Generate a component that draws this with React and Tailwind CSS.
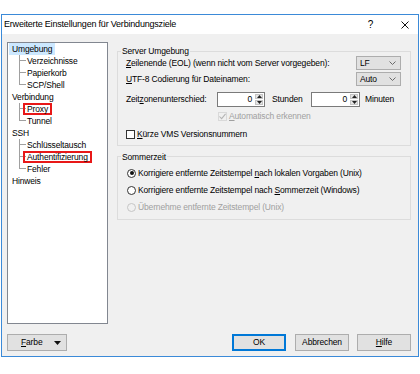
const font = { fontFamily: '"Liberation Sans", Arial, sans-serif' }

const U = ({ children }) => <span className="underline underline-offset-[1px]">{children}</span>

const Chevron = () => (
  <svg width="7" height="4" viewBox="0 0 7 4" className="text-[#6a6a6a]">
    <polyline points="0.5,0.5 3.5,3.5 6.5,0.5" fill="none" stroke="currentColor" strokeWidth="1" />
  </svg>
)

const Combo = ({ value }) => (
  <div className="w-[45px] h-[14px] border border-[#adadad] bg-[#e1e1e1] flex items-center justify-between pl-[3px] pr-[4px]">
    <span>{value}</span>
    <Chevron />
  </div>
)

const Spin = ({ value, w }) => (
  <div className={`${w} h-[15px] border border-[#7a7a7a] bg-white flex items-stretch`}>
    <div className="flex-1 flex items-center justify-end pr-[3px]">{value}</div>
    <div className="w-[9px] flex flex-col gap-[1px] p-[1px] pl-0">
      <div className="flex-1 bg-[#e5e5e5] border border-[#c4c4c4] flex items-center justify-center">
        <svg width="5" height="3" viewBox="0 0 5 3"><polygon points="0,3 5,3 2.5,0" fill="#222" /></svg>
      </div>
      <div className="flex-1 bg-[#e5e5e5] border border-[#c4c4c4] flex items-center justify-center">
        <svg width="5" height="3" viewBox="0 0 5 3"><polygon points="0,0 5,0 2.5,3" fill="#222" /></svg>
      </div>
    </div>
  </div>
)

const Radio = ({ checked, disabled }) => (
  <div
    className={`w-[9px] h-[9px] rounded-full border flex items-center justify-center ${
      disabled ? "border-[#c6c6c6] bg-[#f0f0f0]" : "border-[#333] bg-white"
    }`}
  >
    {checked && <div className="w-[4px] h-[4px] rounded-full bg-[#111]" />}
  </div>
)

const TreeChild = ({ label, last, marked }) => (
  <div className="flex h-[12px] items-center">
    <div className="w-[11px]" />
    <div className="w-[7px] h-full flex flex-col">
      <div className="h-[6px] border-l border-b border-[#a0a0a0]" />
      <div className={`h-[6px] ${last ? "" : "border-l border-[#a0a0a0]"}`} />
    </div>
    {marked ? (
      <span className="-ml-[3px] h-[12px] px-[2px] border-2 border-[#e81818] flex items-center leading-[8px]">
        {label}
      </span>
    ) : (
      <span className="ml-[1px]">{label}</span>
    )}
  </div>
)

const TreeRoot = ({ label, selected }) => (
  <div className="flex h-[12px] items-center">
    <span className={`ml-[1px] pl-[3px] pr-[3px] h-[12px] flex items-center ${selected ? "bg-[#cce8ff]" : ""}`}>
      {label}
    </span>
  </div>
)

const Button = ({ children, primary, className = "" }) => (
  <div
    className={`h-[17px] w-[54px] flex items-center justify-center bg-[#e1e1e1] border ${
      primary ? "border-[#0078d7] shadow-[inset_0_0_0_1px_#0078d7]" : "border-[#adadad]"
    } ${className}`}
  >
    {children}
  </div>
)

export default function App() {
  return (
    <div className="bg-white h-[374px] pt-[14px] pl-[1px] text-[8.5px] text-black tracking-[-0.15px]" style={font}>
      <div className="w-[418px] border border-[#3b8ad8] flex flex-col">
        {/* title bar */}
        <div className="h-[19px] bg-white flex items-center pl-[2px] pr-[9px] text-[9px] tracking-[-0.2px]">
          <span className="flex-1">Erweiterte Einstellungen für Verbindungsziele</span>
          <span className="mr-[28px] text-[10px]">?</span>
          <svg width="8" height="8" viewBox="0 0 8 8">
            <path d="M0.5 0.5 L7.5 7.5 M7.5 0.5 L0.5 7.5" stroke="#111" strokeWidth="1" />
          </svg>
        </div>

        {/* body */}
        <div className="h-[322px] bg-[#f0f0f0] flex flex-col pt-[8px] pl-[5px] pr-[7px]">
          <div className="flex h-[282px]">
            {/* tree */}
            <div className="w-[101px] h-full border border-[#828790] bg-white flex flex-col">
              <TreeRoot label="Umgebung" selected />
              <TreeChild label="Verzeichnisse" />
              <TreeChild label="Papierkorb" />
              <TreeChild label="SCP/Shell" last />
              <TreeRoot label="Verbindung" />
              <TreeChild label="Proxy" marked />
              <TreeChild label="Tunnel" last />
              <TreeRoot label="SSH" />
              <TreeChild label="Schlüsseltausch" />
              <TreeChild label="Authentifizierung" marked />
              <TreeChild label="Fehler" last />
              <TreeRoot label="Hinweis" />
            </div>

            {/* settings */}
            <div className="ml-[9px] flex-1 flex flex-col pt-[9px]">
              <div className="relative border border-[#dcdcdc] pt-[4px] pb-[5px] pl-[8px] pr-[9px] flex flex-col">
                <span className="absolute -top-[7px] left-[3px] px-[1px] bg-[#f0f0f0] leading-[12px]">Server Umgebung</span>
                <div className="h-[14px] flex items-center justify-between">
                  <span>
                    <U>Z</U>eilenende (EOL) (wenn nicht vom Server vorgegeben):
                  </span>
                  <Combo value="LF" />
                </div>
                <div className="mt-[2px] h-[14px] flex items-center justify-between">
                  <span>
                    <U>U</U>TF-8 Codierung für Dateinamen:
                  </span>
                  <Combo value="Auto" />
                </div>
                <div className="mt-[5px] h-[16px] flex items-center">
                  <span className="w-[91px]">
                    Zeit<U>z</U>onenunterschied:
                  </span>
                  <Spin value="0" w="w-[48px]" />
                  <span className="ml-[7px] w-[39px]">Stunden</span>
                  <Spin value="0" w="w-[49px]" />
                  <span className="ml-[5px]">Minuten</span>
                </div>
                <div className="mt-[3px] h-[12px] flex items-center pl-[92px] text-[#a0a0a0]">
                  <div className="w-[9px] h-[9px] border border-[#d9d9d9] flex items-center justify-center">
                    <svg width="8" height="7" viewBox="0 0 8 7">
                      <polyline points="0.5,3.5 3,6 7.5,0.5" fill="none" stroke="#b4b4b4" strokeWidth="1.2" />
                    </svg>
                  </div>
                  <span className="ml-[2px]">
                    <U>A</U>utomatisch erkennen
                  </span>
                </div>
                <div className="mt-[6px] h-[12px] flex items-center">
                  <div className="w-[9px] h-[9px] border border-[#333] bg-white" />
                  <span className="ml-[2px]">
                    <U>K</U>ürze VMS Versionsnummern
                  </span>
                </div>
              </div>

              <div className="relative mt-[10px] border border-[#dcdcdc] pt-[10px] pb-[6px] pl-[9px] flex flex-col">
                <span className="absolute -top-[6px] left-[3px] px-[1px] bg-[#f0f0f0] leading-[12px]">Sommerzeit</span>
                <div className="h-[12px] flex items-center">
                  <Radio checked />
                  <span className="ml-[2px]">
                    Korrigiere entfernte Zeitstempel <U>n</U>ach lokalen Vorgaben (Unix)
                  </span>
                </div>
                <div className="mt-[5px] h-[12px] flex items-center">
                  <Radio />
                  <span className="ml-[2px]">
                    Korrigiere entfernte Zeitstempel nach <U>S</U>ommerzeit (Windows)
                  </span>
                </div>
                <div className="mt-[5px] h-[12px] flex items-center text-[#a0a0a0]">
                  <Radio disabled />
                  <span className="ml-[2px]">Übernehme entfernte Zeitstempel (Unix)</span>
                </div>
              </div>
            </div>
          </div>

          {/* buttons */}
          <div className="mt-[10px] flex items-center">
            <div className="h-[17px] w-[60px] flex items-center bg-[#e1e1e1] border border-[#adadad] pl-[13px] pr-[5px] justify-between">
              <span>
                <U>F</U>arbe
              </span>
              <svg width="7" height="4" viewBox="0 0 7 4"><polygon points="0,0 7,0 3.5,4" fill="#111" /></svg>
            </div>
            <div className="flex-1" />
            <Button primary>OK</Button>
            <Button className="ml-[9px]">Abbrechen</Button>
            <Button className="ml-[8px]">
              <span>
                <U>H</U>ilfe
              </span>
            </Button>
          </div>
        </div>
      </div>
    </div>
  )
}
